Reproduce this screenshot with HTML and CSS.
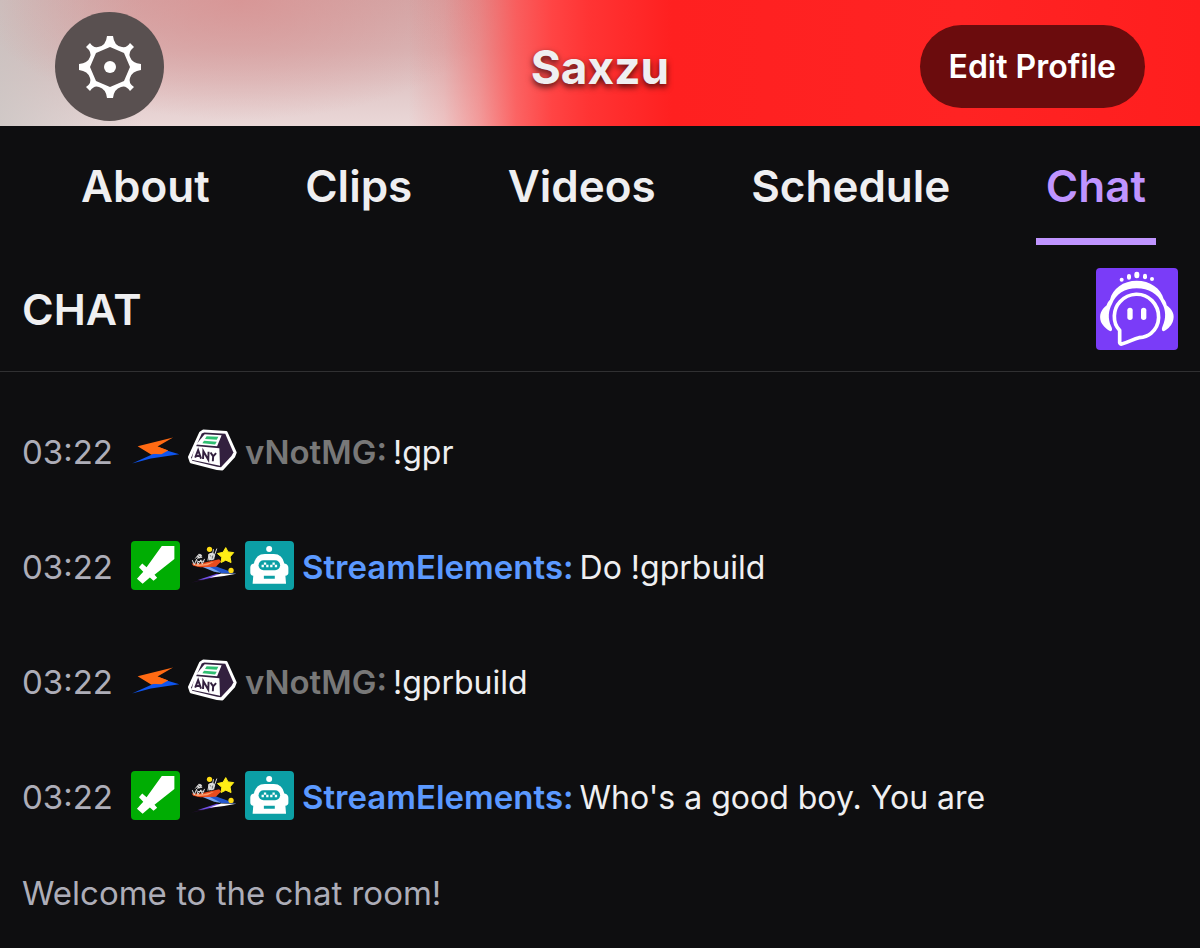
FILE: index.html
```html
<!DOCTYPE html>
<html lang="en">
<head>
<meta charset="utf-8">
<meta name="viewport" content="width=device-width, initial-scale=1">
<title>Saxzu - Chat</title>
<link rel="stylesheet" href="styles.css">
</head>
<body>
<svg class="defs" aria-hidden="true">
  <symbol id="bolt" viewBox="31 19 148 148">
    <path fill="#ff6a13" d="M158 54L51 80L93 106H124L143 93L111 81Z"/>
    <path fill="#0f55ee" d="M34 132L103 101L121 102L139 93L177 104L91 117Z"/>
    <path fill="#ff6a13" d="M111 81L91 103L123 104L143 93Z"/>
  </symbol>
  <symbol id="anykey" viewBox="201 18 150 150">
    <path fill="#fff" stroke="#fff" stroke-width="8" stroke-linejoin="round" d="M248 33L318 37L346 99L341 112L306 150L290 149L210 128L205 113L239 39Z"/>
    <path fill="#33203f" d="M251 38L315 42L340 99L334 110L302 144L290 143L214 124L211 114L243 41Z"/>
    <path fill="#fff" d="M252 43L304 46L290 80L226 75Z"/>
    <path fill="#fff" d="M222 79L297 86L299 140L212 121Z"/>
    <path fill="#2fbf71" d="M258 49L294 51L289 60L253 58ZM250 63L289 66L284 75L245 71Z"/>
    <path stroke="#33203f" stroke-width="6" fill="none" d="M223 115L232 92L241 118M227 109L239 111M247 119L248 95L263 121L264 97M270 99L278 111L287 101M278 111L277 126"/>
  </symbol>
  <symbol id="sword" viewBox="30 33 148 148">
    <rect x="30" y="33" width="148" height="148" rx="12" fill="#00ad03"/>
    <path fill="#fff" d="M123 48L161 48L161 87L101 135L109 144L98 153L87 143L65 162L48 147L67 126L54 112L64 101L77 112Z"/>
  </symbol>
  <symbol id="boat" viewBox="203 33 148 148">
    <path fill="#21102d" d="M212 159L285 136L312 138L242 153Z"/>
    <path fill="#7250e8" d="M233 151L290 132L306 136L250 149Z"/>
    <path fill="#fff" d="M267 144L303 131L349 132L312 139Z"/>
    <path fill="#2458ce" d="M242 108L282 108L347 131L304 130Z"/>
    <path fill="#7aa5ef" d="M238 108L262 108L303 129L282 126Z"/>
    <path fill="#e84c1d" d="M214 101L240 101L297 88L303 95L287 111L240 112L219 108Z"/>
    <path fill="#ff9b68" d="M219 104L250 103L282 96L262 106L231 109Z"/>
    <path fill="none" stroke="#ddd" stroke-width="3" d="M216 91L222 105L229 88L233 104L242 90L246 103L253 87M225 86L237 72L242 79L231 85L246 82M263 92L267 72L276 70L275 91L284 76M278 69L280 58M284 73L290 56M267 81L281 82M233 95L252 94"/>
    <path fill="#ddd" d="M264 74L277 68L285 74L282 89L266 92ZM229 79L242 72L246 78L237 85Z"/>
    <path fill="none" stroke="#333" stroke-width="2" d="M269 77L273 79M278 77L276 86M235 78L240 81"/>
    <path fill="#ffed16" stroke="#ffed16" stroke-width="3" stroke-linejoin="round" d="M317 53L324 66L341 68L330 81L333 98L317 91L303 98L305 82L292 71L309 67Z"/>
    <circle cx="268" cy="58" r="8" fill="#ffdc13"/><circle cx="333" cy="122" r="8" fill="#ffdc13"/>
  </symbol>
  <symbol id="robot" viewBox="374 33 148 148">
    <rect x="374" y="33" width="148" height="148" rx="12" fill="#0c9fa5"/>
    <circle cx="447" cy="57" r="9" fill="#fff"/>
    <path fill="#fff" d="M434 72H461Q487 72 493 101Q505 103 505 114V129Q505 137 496 138L498 162H397L399 138Q390 137 390 128V113Q390 103 401 101Q407 72 434 72Z"/>
    <rect x="415" y="91" width="65" height="30" rx="15" fill="#0c9fa5"/>
    <path fill="#fff" d="M431 98h7v7h7v7h-7v-7h-7v7h-7v-7h7zM457 98h7v7h7v7h-7v-7h-7v7h-7v-7h7z"/>
    <rect x="431" y="138" width="33" height="9" fill="#0c9fa5"/>
  </symbol>
</svg>

<header class="banner">
  <button class="settings" type="button" aria-label="Settings">
    <svg viewBox="-31 -31 62 62" aria-hidden="true">
      <path fill="#fff" fill-rule="evenodd" d="M-3 -31H3Q4 -21 12 -20Q17 -19 20 -24L24 -20Q18 -15 20 -10Q22 -4 31 -3V3Q22 4 20 11Q18 16 24 20L20 24Q16 18 11 20Q4 22 3 31H-3Q-4 22 -11 20Q-16 18 -20 24L-24 20Q-18 16 -20 11Q-22 4 -31 3V-3Q-22 -4 -20 -10Q-18 -15 -24 -20L-20 -24Q-17 -19 -12 -20Q-4 -21 -3 -31ZM0 -20L-14 -14L-20 0L-14 14L0 20L14 14L20 0L14 -14Z"/>
      <circle r="6" fill="#fff"/>
    </svg>
  </button>
  <h1 class="channel">Saxzu</h1>
  <button class="edit" type="button">Edit Profile</button>
</header>

<nav class="tabs" aria-label="Channel">
  <a class="tab" href="#about">About</a>
  <a class="tab" href="#clips">Clips</a>
  <a class="tab" href="#videos">Videos</a>
  <a class="tab" href="#schedule">Schedule</a>
  <a class="tab active" href="#chat" aria-current="page">Chat</a>
</nav>

<main id="chat">
  <div class="chat-head">
    <h2 class="chat-title">CHAT</h2>
    <button class="listen" type="button" aria-label="Chat companion">
      <svg viewBox="49 39 246 246" aria-hidden="true">
        <rect x="49" y="39" width="246" height="246" rx="12" fill="#7a3cf8"/>
        <g fill="#fff">
          <circle cx="126" cy="74" r="6"/><rect x="142" y="57" width="12" height="17" rx="6"/><rect x="164" y="50" width="15" height="20" rx="7"/><rect x="190" y="56" width="12" height="17" rx="6"/><circle cx="217" cy="72" r="6"/>
          <path d="M91 134C98 101 131 77 171 77C211 77 244 100 252 132C258 138 260 145 261 151C279 164 287 181 279 201C274 214 260 226 252 229C245 228 246 220 249 213C260 190 258 164 248 147C235 116 207 100 171 100C135 100 109 117 97 147C86 167 84 190 94 213C98 221 99 227 93 229C84 226 70 213 64 201C57 181 64 164 81 151C82 145 86 139 91 134Z"/>
          <rect x="143" y="158" width="16" height="37" rx="8"/><rect x="184" y="158" width="16" height="37" rx="8"/>
        </g>
        <path fill="none" stroke="#fff" stroke-width="11" stroke-linejoin="round" d="M120 226C97 203 100 162 121 140C148 112 190 110 217 137C245 166 243 211 214 235C201 246 189 247 178 248C161 252 146 262 126 267Q121 268 120 263Z"/>
      </svg>
    </button>
  </div>

  <ul class="log">
    <li class="message">
      <time class="time">03:22</time>
      <span class="badges"><svg><use href="#bolt"/></svg><svg><use href="#anykey"/></svg></span>
      <b class="user muted">vNotMG:</b>
      <span class="text">!gpr</span>
    </li>
    <li class="message">
      <time class="time">03:22</time>
      <span class="badges"><svg><use href="#sword"/></svg><svg><use href="#boat"/></svg><svg><use href="#robot"/></svg></span>
      <b class="user bot">StreamElements:</b>
      <span class="text">Do !gprbuild</span>
    </li>
    <li class="message">
      <time class="time">03:22</time>
      <span class="badges"><svg><use href="#bolt"/></svg><svg><use href="#anykey"/></svg></span>
      <b class="user muted">vNotMG:</b>
      <span class="text">!gprbuild</span>
    </li>
    <li class="message">
      <time class="time">03:22</time>
      <span class="badges"><svg><use href="#sword"/></svg><svg><use href="#boat"/></svg><svg><use href="#robot"/></svg></span>
      <b class="user bot">StreamElements:</b>
      <span class="text">Who's a good boy. You are</span>
    </li>
  </ul>
  <p class="welcome">Welcome to the chat room!</p>
</main>
</body>
</html>
```

FILE: styles.css
```css
* { box-sizing: border-box; }

body {
  margin: 0;
  background: #0e0e10;
  color: #efeff1;
  font-family: Inter, "Liberation Sans", sans-serif;
  font-size: 33px;
  line-height: 51px;
}

.defs { display: none; }
h1, h2, p, ul { margin: 0; padding: 0; }
button { border: 0; padding: 0; font: inherit; color: inherit; cursor: pointer; }
svg { display: block; }

.banner {
  display: grid;
  grid-template-columns: 1fr auto 1fr;
  align-items: center;
  padding: 12px 55px 5px;
  background:
    linear-gradient(to right, rgba(255, 80, 80, 0) 34%, rgba(255, 80, 80, 0.15) 37%, rgba(255, 80, 80, 0.45) 40%, rgba(255, 80, 80, 0.85) 43%, #ff4444 46%, #ff3434 49%, #ff2020 56%, #ff2323 80%, #ff1e1e),
    radial-gradient(ellipse 260px 120px at 20% 0, rgba(217, 145, 145, 0.8), rgba(217, 145, 145, 0)),
    linear-gradient(to right, rgba(202, 197, 195, 0.8), rgba(202, 197, 195, 0) 12%),
    linear-gradient(to bottom, #d3acac, #d9b8b8 40%, #ead8d8);
}

.settings {
  display: grid;
  place-items: center;
  width: 109px;
  height: 109px;
  border-radius: 50%;
  background: #595050;
}
.settings svg { width: 62px; height: 62px; }

.channel {
  font-size: 46px;
  font-weight: 700;
  line-height: 56px;
  text-shadow: 0 3px 6px rgba(0, 0, 0, 0.7);
}

.edit {
  justify-self: end;
  padding: 16px 29px;
  border-radius: 42px;
  background: #6b0c0d;
  color: #fff;
  font-size: 32px;
  font-weight: 600;
}

.tabs {
  display: flex;
  justify-content: space-between;
  padding: 0 44px 0 71px;
}
.tab {
  padding: 32px 10px 24px;
  border-bottom: 7px solid transparent;
  color: #efeff1;
  font-size: 44px;
  font-weight: 600;
  line-height: 56px;
  text-decoration: none;
}
.tab.active { color: #bf94ff; border-color: #bf94ff; }

.chat-head {
  display: flex;
  align-items: center;
  justify-content: space-between;
  padding: 23px 22px 21px;
  border-bottom: 1px solid #303032;
}
.chat-title { font-size: 43px; font-weight: 600; }
.listen { background: none; }
.listen svg { width: 82px; height: 82px; }

.log { padding-top: 23px; list-style: none; }
.message {
  display: flex;
  align-items: center;
  padding: 31px 22px;
}
.time { margin-right: 18px; color: #adadb8; }
.badges { display: flex; gap: 8px; padding: 0 8px 4px 0; }
.badges svg { width: 49px; height: 49px; }
.user { margin-right: 6px; font-weight: 600; }
.text { font-size: 32px; }
.muted { color: #787878; }
.bot { color: #5b99ff; }
.welcome { padding: 13px 22px 27px; color: #adadb8; }
```
